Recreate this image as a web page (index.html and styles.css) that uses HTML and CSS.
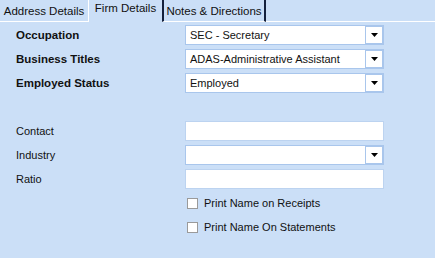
FILE: index.html
```html
<!DOCTYPE html>
<html lang="en">
<head>
    <meta charset="UTF-8">
    <title>Firm Details</title>
    <link rel="stylesheet" href="styles.css">
</head>
<body>
    <!-- Tab strip -->
    <div class="tabs">
        <div class="tab tab-first">Address Details</div>
        <div class="tab tab-active">Firm Details</div>
        <div class="tab tab-dark">Notes &amp; Directions</div>
        <div class="tab-fill"></div>
    </div>

    <!-- Firm details panel -->
    <div class="panel">
        <div class="form">
            <label class="lbl bold">Occupation</label>
            <div class="combo">
                <span class="combo-text">SEC - Secretary</span>
                <span class="combo-btn"><svg width="7" height="4" viewBox="0 0 7 4"><polygon points="0,0 7,0 3.5,4" fill="#000"/></svg></span>
            </div>

            <label class="lbl bold">Business Titles</label>
            <div class="combo">
                <span class="combo-text">ADAS-Administrative Assistant</span>
                <span class="combo-btn"><svg width="7" height="4" viewBox="0 0 7 4"><polygon points="0,0 7,0 3.5,4" fill="#000"/></svg></span>
            </div>

            <label class="lbl bold">Employed Status</label>
            <div class="combo">
                <span class="combo-text">Employed</span>
                <span class="combo-btn"><svg width="7" height="4" viewBox="0 0 7 4"><polygon points="0,0 7,0 3.5,4" fill="#000"/></svg></span>
            </div>

            <div class="spacer"></div>

            <label class="lbl">Contact</label>
            <div class="textbox"></div>

            <label class="lbl">Industry</label>
            <div class="combo">
                <span class="combo-text"></span>
                <span class="combo-btn"><svg width="7" height="4" viewBox="0 0 7 4"><polygon points="0,0 7,0 3.5,4" fill="#000"/></svg></span>
            </div>

            <label class="lbl">Ratio</label>
            <div class="textbox"></div>

            <div class="check-row">
                <span class="check"></span>
                <span>Print Name on Receipts</span>
            </div>
            <div class="check-row">
                <span class="check"></span>
                <span>Print Name On Statements</span>
            </div>
        </div>
    </div>
</body>
</html>
```

FILE: styles.css
```css
/* Global */
body {
    margin: 0;
    width: 435px;
    height: 258px;
    overflow: hidden;
    background: #cbdff7;
    font-family: "Liberation Sans", Arial, sans-serif;
    font-size: 11px;
    color: #111;
}

/* Tabs */
.tabs {
    display: flex;
    height: 22px;
}

.tab {
    box-sizing: border-box;
    height: 22px;
    padding: 4px 0 0 0;
    font-size: 11.5px;
    text-align: center;
    border-bottom: 1px solid #fff;
}

.tab-first {
    width: 89px;
    padding-top: 5px;
    border-right: 1px solid #fff;
}

.tab-active {
    width: 73px;
    padding-top: 2px;
    border-bottom: none;
}

.tab-dark {
    width: 104px;
    padding-top: 5px;
    border-left: 2px solid #14213d;
    border-right: 2px solid #14213d;
}

.tab-fill {
    flex: 1;
    border-bottom: 1px solid #fff;
}

/* Panel */
.panel {
    padding: 3px 0 0 16px;
}

.form {
    display: grid;
    grid-template-columns: 169px 199px;
    grid-auto-rows: 20px;
    row-gap: 4px;
}

.lbl {
    display: flex;
    align-items: center;
    color: #111;
}

.bold {
    font-weight: bold;
    font-size: 11.5px;
}

.spacer {
    grid-column: 1 / 3;
}

/* Inputs */
.combo {
    display: flex;
    box-sizing: border-box;
    border: 1px solid #a9c6ec;
    background: #fff;
}

.combo-text {
    flex: 1;
    padding-left: 4px;
    line-height: 18px;
}

.combo-btn {
    box-sizing: border-box;
    width: 18px;
    border: 1px solid #a9c6ec;
    border-right-width: 1px;
    display: flex;
    align-items: center;
    justify-content: center;
    background: #fff;
}

.textbox {
    box-sizing: border-box;
    border: 1px solid #bcd3f0;
    background: #fff;
}

/* Checkboxes */
.check-row {
    grid-column: 2;
    display: flex;
    align-items: center;
    gap: 6px;
    padding-left: 2px;
}

.check {
    box-sizing: border-box;
    width: 11px;
    height: 11px;
    border: 1px solid #9a9a9a;
    background: #fff;
}
```
